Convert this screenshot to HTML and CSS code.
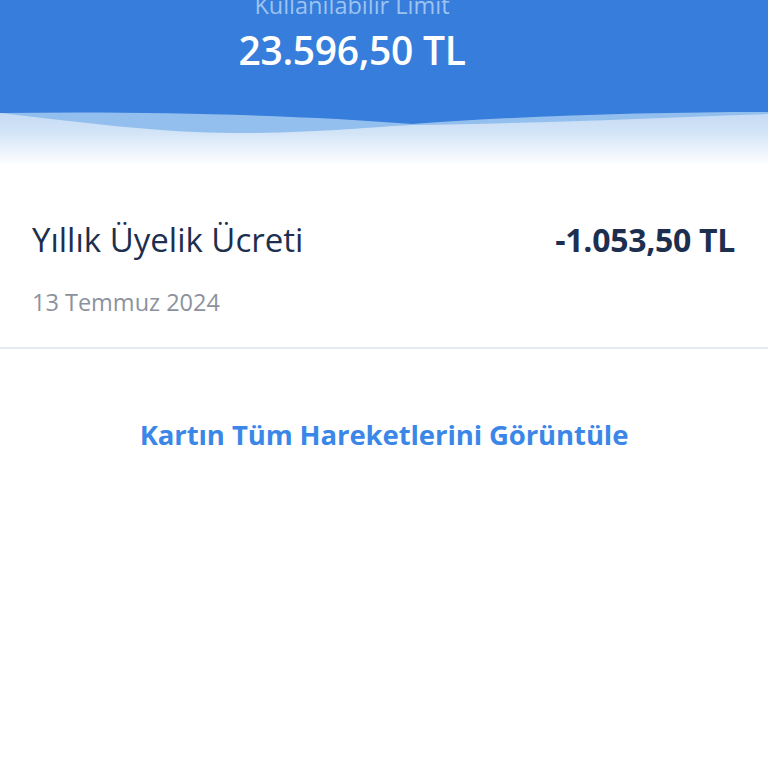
FILE: index.html
```html
<!DOCTYPE html>
<html lang="tr">
<head>
<meta charset="utf-8">
<link rel="stylesheet" href="styles.css">
</head>
<body>
<div class="page">
  <header class="hero">
    <div class="hero-inner">
      <div class="hero-label">Kullanılabilir Limit</div>
      <div class="hero-amount">23.596,50 TL</div>
    </div>
  </header>
  <div class="wave">
    <svg width="768" height="56" viewBox="0 0 768 56" preserveAspectRatio="none">
      <path d="M0,0 H768 V4 C650,8 520,14 412,15 C370,17 320,23 235,23 C160,23 80,12 0,3 Z" fill="#93BFEE"/>
      <path d="M0,0 H768 V2 C650,2 520,6 412,14 C300,5 150,1 0,3 Z" fill="#377DDB"/>
    </svg>
  </div>
  <section class="tx">
    <div class="tx-top">
      <div class="tx-title">Yıllık Üyelik Ücreti</div>
      <div class="tx-amount">-1.053,50 TL</div>
    </div>
    <div class="tx-date">13 Temmuz 2024</div>
  </section>
  <div class="link-row">
    <a class="all-link" href="#">Kartın Tüm Hareketlerini Görüntüle</a>
  </div>
</div>
</body>
</html>
```
FILE: styles.css
```css
html, body {
  margin: 0;
  padding: 0;
  background: #ffffff;
}
body {
  font-family: "Open Sans", "Noto Sans", sans-serif;
  width: 768px;
  height: 768px;
  overflow: hidden;
}
.page {
  display: flex;
  flex-direction: column;
}
.hero {
  background: #377DDB;
  height: 110px;
  overflow: hidden;
}
.hero-inner {
  display: flex;
  flex-direction: column;
  align-items: center;
  margin-top: -13px;
  padding-right: 64px;
}
.hero-label {
  color: #9DC3F1;
  font-size: 23.5px;
  line-height: 36px;
}
.hero-amount {
  color: #ffffff;
  font-size: 39px;
  font-weight: 600;
  line-height: 54px;
  letter-spacing: -0.3px;
}
.wave {
  height: 56px;
  background: linear-gradient(#C2D9F5 0%, #D3E4F7 40%, #ffffff 100%);
}
.wave svg {
  display: block;
}
.tx {
  padding: 54px 33px 0 32px;
  height: 127px;
  border-bottom: 2px solid #E8EBF0;
}
.tx-top {
  display: flex;
  justify-content: space-between;
  align-items: baseline;
}
.tx-title {
  color: #1D2F4F;
  font-size: 33px;
  line-height: 40px;
}
.tx-amount {
  color: #1D2F4F;
  font-size: 32px;
  font-weight: 700;
  line-height: 40px;
  letter-spacing: -0.3px;
}
.tx-date {
  color: #8B929E;
  font-size: 23.5px;
  line-height: 30px;
  margin-top: 27px;
}
.link-row {
  display: flex;
  justify-content: center;
  padding-top: 66px;
}
.all-link {
  color: #3B87E8;
  font-size: 27.5px;
  font-weight: 700;
  line-height: 40px;
  text-decoration: none;
  letter-spacing: -0.1px;
}
```
